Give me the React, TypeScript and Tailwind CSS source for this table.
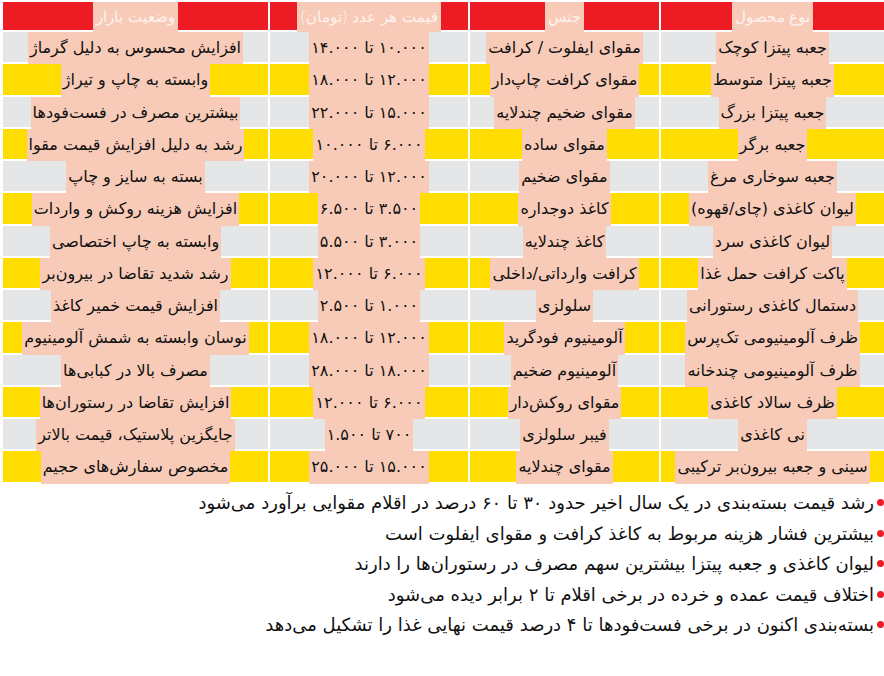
import React from "react";

const rows: [string, string, string, string][] = [
  ["جعبه پیتزا کوچک", "مقوای ایفلوت / کرافت", "۱۰.۰۰۰ تا ۱۴.۰۰۰", "افزایش محسوس به دلیل گرماژ"],
  ["جعبه پیتزا متوسط", "مقوای کرافت چاپ‌دار", "۱۲.۰۰۰ تا ۱۸.۰۰۰", "وابسته به چاپ و تیراژ"],
  ["جعبه پیتزا بزرگ", "مقوای ضخیم چندلایه", "۱۵.۰۰۰ تا ۲۲.۰۰۰", "بیشترین مصرف در فست‌فودها"],
  ["جعبه برگر", "مقوای ساده", "۶.۰۰۰ تا ۱۰.۰۰۰", "رشد به دلیل افزایش قیمت مقوا"],
  ["جعبه سوخاری مرغ", "مقوای ضخیم", "۱۲.۰۰۰ تا ۲۰.۰۰۰", "بسته به سایز و چاپ"],
  ["لیوان کاغذی (چای/قهوه)", "کاغذ دوجداره", "۳.۵۰۰ تا ۶.۵۰۰", "افزایش هزینه روکش و واردات"],
  ["لیوان کاغذی سرد", "کاغذ چندلایه", "۳.۰۰۰ تا ۵.۵۰۰", "وابسته به چاپ اختصاصی"],
  ["پاکت کرافت حمل غذا", "کرافت وارداتی/داخلی", "۶.۰۰۰ تا ۱۲.۰۰۰", "رشد شدید تقاضا در بیرون‌بر"],
  ["دستمال کاغذی رستورانی", "سلولزی", "۱.۰۰۰ تا ۲.۵۰۰", "افزایش قیمت خمیر کاغذ"],
  ["ظرف آلومینیومی تک‌پرس", "آلومینیوم فودگرید", "۱۲.۰۰۰ تا ۱۸.۰۰۰", "نوسان وابسته به شمش آلومینیوم"],
  ["ظرف آلومینیومی چندخانه", "آلومینیوم ضخیم", "۱۸.۰۰۰ تا ۲۸.۰۰۰", "مصرف بالا در کبابی‌ها"],
  ["ظرف سالاد کاغذی", "مقوای روکش‌دار", "۶.۰۰۰ تا ۱۲.۰۰۰", "افزایش تقاضا در رستوران‌ها"],
  ["نی کاغذی", "فیبر سلولزی", "۷۰۰ تا ۱.۵۰۰", "جایگزین پلاستیک، قیمت بالاتر"],
  ["سینی و جعبه بیرون‌بر ترکیبی", "مقوای چندلایه", "۱۵.۰۰۰ تا ۲۵.۰۰۰", "مخصوص سفارش‌های حجیم"],
];

const headers = ["نوع محصول", "جنس", "قیمت هر عدد (تومان)", "وضعیت بازار"];

const bullets = [
  "رشد قیمت بسته‌بندی در یک سال اخیر حدود ۳۰ تا ۶۰ درصد در اقلام مقوایی برآورد می‌شود",
  "بیشترین فشار هزینه مربوط به کاغذ کرافت و مقوای ایفلوت است",
  "لیوان کاغذی و جعبه پیتزا بیشترین سهم مصرف در رستوران‌ها را دارند",
  "اختلاف قیمت عمده و خرده در برخی اقلام تا ۲ برابر دیده می‌شود",
  "بسته‌بندی اکنون در برخی فست‌فودها تا ۴ درصد قیمت نهایی غذا را تشکیل می‌دهد",
];

export default function App() {
  return (
    <div
      dir="rtl"
      className="w-[884px] h-[676px] bg-white overflow-hidden"
      style={{ fontFamily: '"DejaVu Sans", sans-serif' }}
    >
      <div className="pt-[2px] pl-[3px]">
        <div className="grid grid-cols-[223px_189px_198px_265px] gap-x-[2px]">
          {headers.map((h, i) => (
            <div
              key={"h" + i}
              className="h-[30px] bg-[#ed1c24] border-b-2 border-white flex justify-center items-start"
            >
              <span className="h-[30px] bg-[#f8cbb8] px-[3px] flex items-center text-[15px] text-[#fdf3ee] font-light leading-none">
                {h}
              </span>
            </div>
          ))}
          {rows.map((r, ri) =>
            r.map((c, ci) => (
              <div
                key={ri + "-" + ci}
                className={
                  "h-[32.25px] border-b-2 border-white flex justify-center items-start " +
                  (ri % 2 === 0 ? "bg-[#e5e6e7]" : "bg-[#ffdd00]")
                }
              >
                <span className="h-[32.25px] bg-[#f8cbb8] px-[2px] flex items-center text-[16px] text-[#111] leading-none whitespace-nowrap">
                  {c}
                </span>
              </div>
            ))
          )}
        </div>
      </div>
      <ul className="mt-[4px] flex flex-col">
        {bullets.map((b, i) => (
          <li key={i} className="h-[30.5px] flex items-center gap-[3px] text-[18px] text-[#111] whitespace-nowrap">
            <span className="w-[7px] h-[7px] rounded-full bg-[#ed1c24] shrink-0" />
            <span>{b}</span>
          </li>
        ))}
      </ul>
    </div>
  );
}
